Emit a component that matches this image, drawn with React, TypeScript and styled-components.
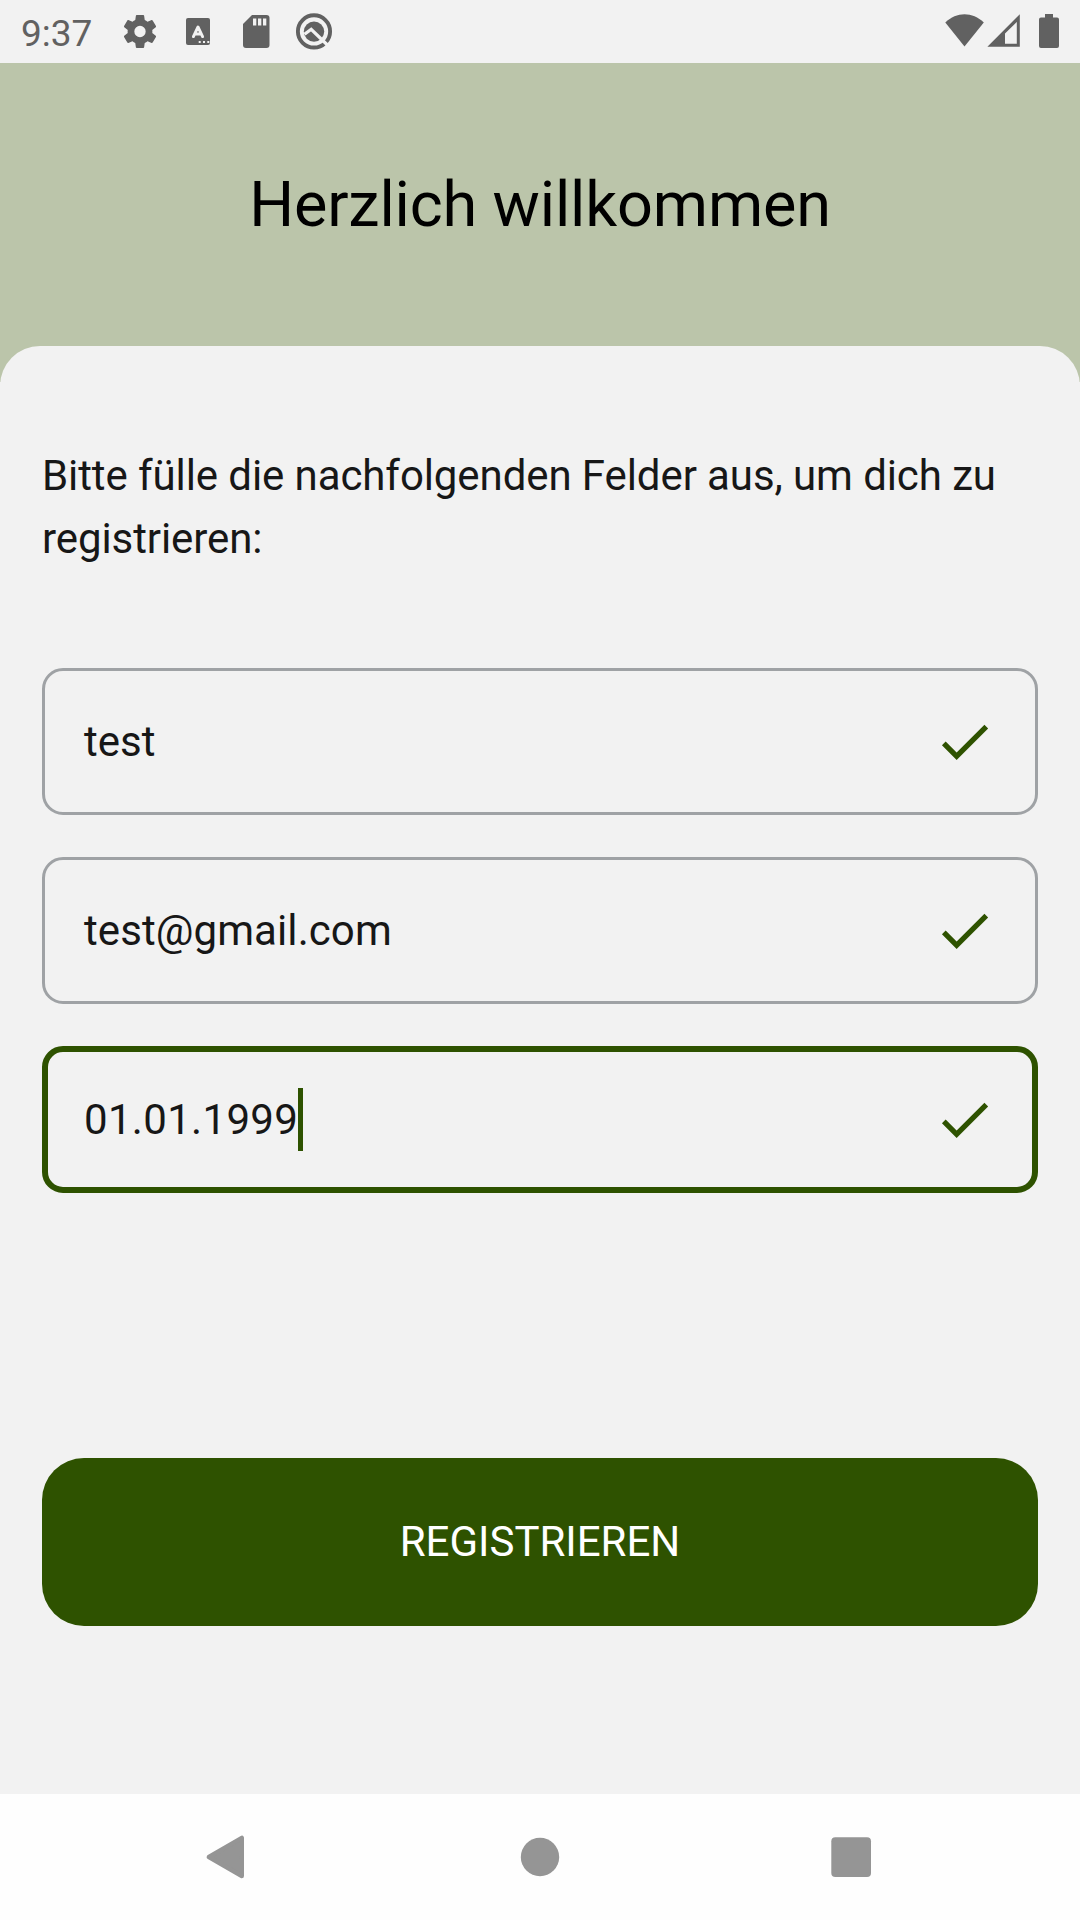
import React, { useState } from "react";
import styled, { createGlobalStyle } from "styled-components";

const green = "#2e5200";
const surface = "#f2f2f2";
const systemInk = "#616161";

const GlobalStyle = createGlobalStyle`
  * { box-sizing: border-box; }
  body { margin: 0; background: ${surface}; }
`;

const Screen = styled.div`
  display: flex;
  flex-direction: column;
  width: 1080px;
  height: 1920px;
  overflow: hidden;
  background: ${surface};
  color: #171717;
  font-family: Roboto, "Noto Sans", sans-serif;
`;

const StatusBar = styled.header`
  display: flex;
  justify-content: space-between;
  flex: 0 0 63px;
  color: ${systemInk};
`;

const StatusGroup = styled.div`
  display: flex;
  align-items: center;
`;

const Clock = styled.time`
  width: 113px;
  height: 63px;
  padding: 4px 0 0 21px;
  font-size: 37px;
  line-height: 59px;
  white-space: nowrap;
`;

const Glyph = styled.svg`
  display: block;
  flex: none;
  fill: currentColor;
`;

const Banner = styled.div`
  flex: 0 0 319px;
  padding-top: 100px;
  background: #bbc5aa;
`;

const Title = styled.h1`
  margin: 0;
  color: #000;
  text-align: center;
  font-size: 63px;
  line-height: 83px;
  font-weight: 400;
  letter-spacing: -0.16px;
`;

const Sheet = styled.main`
  flex: 1;
  display: flex;
  flex-direction: column;
  margin-top: -36px;
  padding: 98px 42px 0;
  border-radius: 40px 40px 0 0;
  background: ${surface};
`;

const Intro = styled.p`
  margin: 0 0 98px;
  font-size: 42px;
  line-height: 63px;
  letter-spacing: -0.09px;
`;

const Form = styled.form`
  display: flex;
  flex-direction: column;
  gap: 42px;
`;

const Field = styled.label<{ $active?: boolean }>`
  display: flex;
  align-items: center;
  justify-content: space-between;
  height: 147px;
  padding: 0 ${(p) => (p.$active ? 36 : 39)}px;
  border: ${(p) => (p.$active ? `6px solid ${green}` : "3px solid #9fa2a5")};
  border-radius: 21px;
`;

const Value = styled.span<{ $tracking: number }>`
  display: flex;
  align-items: center;
  font-size: 42px;
  line-height: 63px;
  letter-spacing: ${(p) => p.$tracking}px;
`;

const Caret = styled.i`
  width: 5px;
  height: 63px;
  background: ${green};
`;

const Submit = styled.button`
  height: 168px;
  margin-top: 223px;
  padding: 0 0 1px;
  border: 0;
  border-radius: 42px;
  background: ${green};
  color: #fff;
  font: 400 42px/63px Roboto, "Noto Sans", sans-serif;
`;

const NavBar = styled.nav`
  flex: 0 0 126px;
  display: grid;
  grid-template-columns: repeat(3, 1fr);
  place-items: center;
  padding: 0 72px;
  background: #fefefe;
  color: #959595;
`;

const Check = () => (
  <Glyph width="63" height="63" viewBox="0 0 24 24">
    <path d="M9 16.170 4.830 12l-1.420 1.410L9 19 21 7l-1.410-1.410z" fill={green} />
  </Glyph>
);

const fields = [
  { id: "name", value: "test", tracking: 0 },
  { id: "mail", value: "test@gmail.com", tracking: 0.08 },
  { id: "birthday", value: "01.01.1999", tracking: 0.32 },
];

export default function App() {
  const [active, setActive] = useState("birthday");
  return (
    <Screen>
      <GlobalStyle />
      <StatusBar>
        <StatusGroup>
          <Clock>9:37</Clock>
          <Glyph width="53" height="63" viewBox="0 0 53 63">
            <path
              transform="translate(6.36 10.86) scale(1.72)"
              d="M19.14 12.94c.04-.3.06-.61.06-.94 0-.32-.02-.64-.07-.94l2.03-1.58a.49.49 0 0 0 .12-.61l-1.92-3.32a.488.488 0 0 0-.59-.22l-2.39.96c-.5-.38-1.03-.7-1.62-.94l-.36-2.54a.484.484 0 0 0-.48-.41h-3.84c-.24 0-.43.17-.47.41l-.36 2.54c-.59.24-1.13.57-1.62.94l-2.39-.96c-.22-.08-.47 0-.59.22L2.74 8.87c-.12.21-.08.47.12.61l2.03 1.58c-.05.3-.09.63-.09.94s.02.64.07.94l-2.03 1.58a.49.49 0 0 0-.12.61l1.92 3.32c.12.22.37.29.59.22l2.39-.96c.5.38 1.03.7 1.62.94l.36 2.54c.05.24.24.41.48.41h3.84c.24 0 .44-.17.47-.41l.36-2.54c.59-.24 1.13-.56 1.62-.94l2.39.96c.22.08.47 0 .59-.22l1.92-3.32c.12-.22.07-.47-.12-.61l-2.01-1.58zM12 15.3A3.3 3.3 0 1 1 12 8.700a3.3 3.300 0 0 1 0 6.600z"
            />
          </Glyph>
          <Glyph width="64" height="63" viewBox="0 0 64 63">
            <rect x="20" y="18" width="24" height="27" rx="2" />
            <path d="m27.400 36.600 4.600-9.600 4.600 9.600m-7.500-2.600h5.800" fill="none" stroke={surface} strokeWidth="2.900" strokeLinecap="round" strokeLinejoin="round" />
            <path d="M32.700 41h2v2h-2zM37 41h2v2h-2zM41.300 41h2v2h-2z" fill={surface} />
          </Glyph>
          <Glyph width="52" height="63" viewBox="0 0 52 63">
            <path d="M22 15h14.500a3 3 0 0 1 3 3v27a3 3 0 0 1-3 3h-20.500a3 3 0 0 1-3-3V24z" />
            <path d="M23 18.500h3.300v7H23zM28 18.500h3.300v7H28zM33 18.500h3.300v7H33z" fill={surface} />
          </Glyph>
          <Glyph width="64" height="63" viewBox="0 0 64 63">
            <circle cx="32" cy="31.400" r="16.100" fill="none" stroke="currentColor" strokeWidth="3.900" />
            <circle cx="32" cy="31.600" r="10.200" />
            <path d="m22.500 34.300 6.700-5 17.800 17.200" fill="none" stroke={surface} strokeWidth="3.300" />
          </Glyph>
        </StatusGroup>
        <StatusGroup>
          <Glyph width="135" height="63" viewBox="945 0 135 63">
            <path d="M945.300 22.600C956.500 11.600 972.500 11.600 983.800 22.600L964.500 46.600z" />
            <path fillRule="evenodd" d="M987.400 46.700 1019.800 14.300V46.700zM1005 33.500V43.700H1016.800V22z" />
            <path d="M1045 14h8v3.500h4a2 2 0 0 1 2 2V46a2 2 0 0 1-2 2h-16a2 2 0 0 1-2-2V19.500a2 2 0 0 1 2-2h4z" />
          </Glyph>
        </StatusGroup>
      </StatusBar>
      <Banner>
        <Title>Herzlich willkommen</Title>
      </Banner>
      <Sheet>
        <Intro>Bitte fülle die nachfolgenden Felder aus, um dich zu registrieren:</Intro>
        <Form onSubmit={(e) => e.preventDefault()}>
          {fields.map((f) => (
            <Field key={f.id} $active={f.id === active} onClick={() => setActive(f.id)}>
              <Value $tracking={f.tracking}>
                {f.value}
                {f.id === active && <Caret />}
              </Value>
              <Check />
            </Field>
          ))}
          <Submit>REGISTRIEREN</Submit>
        </Form>
      </Sheet>
      <NavBar>
        <Glyph width="44" height="44" viewBox="0 0 44 44">
          <path d="M2.900 22 35.800 2.900v38.200z" stroke="currentColor" strokeWidth="4.400" strokeLinejoin="round" />
        </Glyph>
        <Glyph width="40" height="40" viewBox="0 0 40 40">
          <circle cx="20" cy="20" r="19.200" />
        </Glyph>
        <Glyph width="44" height="44" viewBox="0 0 44 44">
          <rect x="1.300" y="2.200" width="39.700" height="39.700" rx="4" />
        </Glyph>
      </NavBar>
    </Screen>
  );
}
